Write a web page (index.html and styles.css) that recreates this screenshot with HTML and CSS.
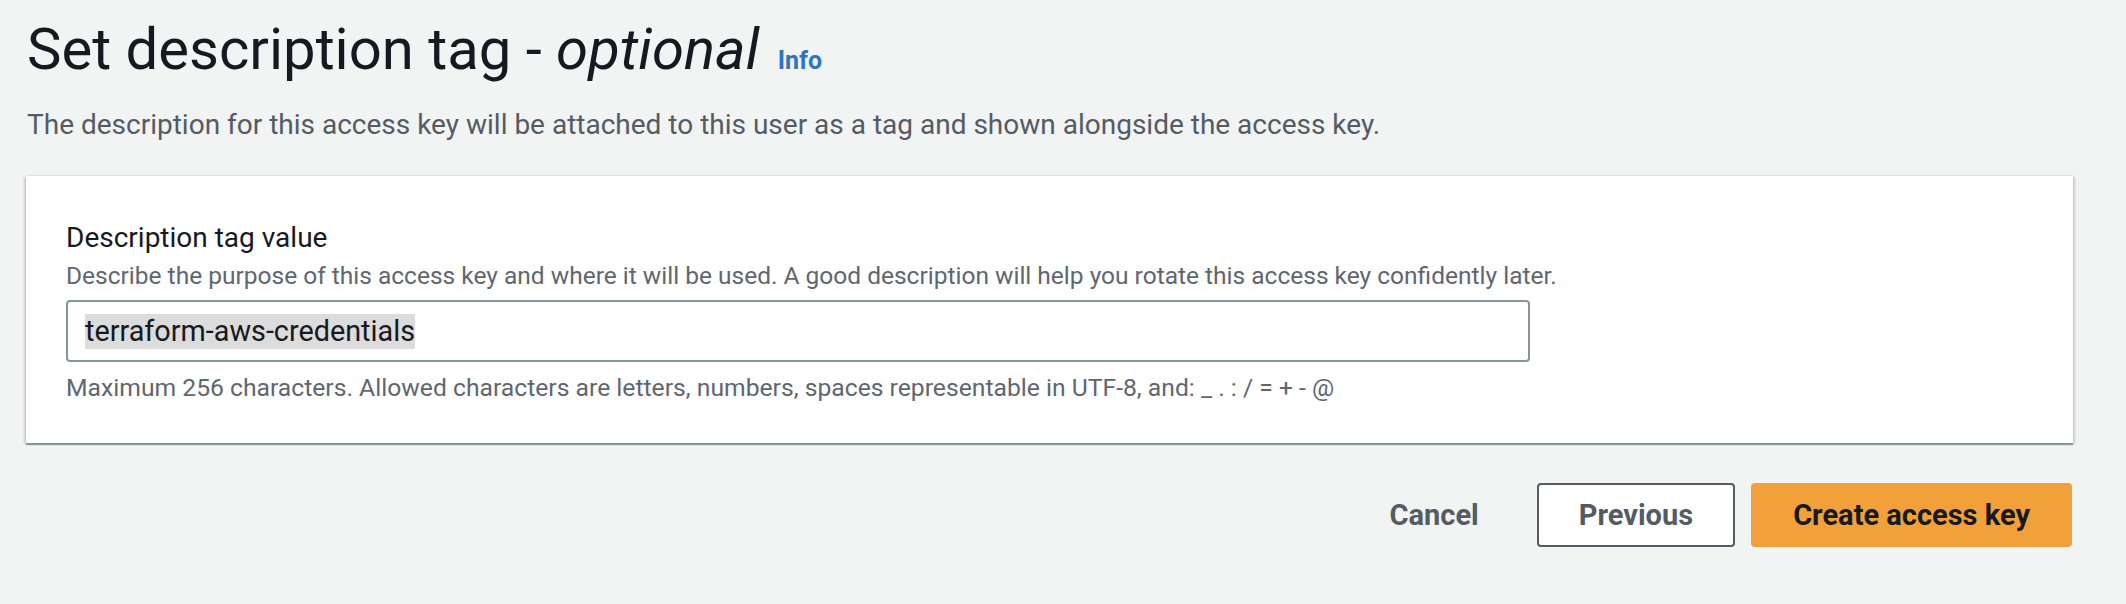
FILE: index.html
```html
<!DOCTYPE html>
<html lang="en">
<head>
<meta charset="utf-8">
<title>Set description tag</title>
<link rel="stylesheet" href="styles.css">
</head>
<body>
<main class="page">
  <header class="head">
    <h1 class="title">Set description tag - <em class="opt">optional</em> <a class="info" href="#">Info</a></h1>
    <p class="lead">The description for this access key will be attached to this user as a tag and shown alongside the access key.</p>
  </header>
  <section class="card">
    <div class="field">
      <label class="label">Description tag value</label>
      <p class="hint">Describe the purpose of this access key and where it will be used. A good description will help you rotate this access key confidently later.</p>
      <div class="input" role="textbox"><span class="sel">terraform-aws-credentials</span></div>
      <p class="constraint">Maximum 256 characters. Allowed characters are letters, numbers, spaces representable in UTF-8, and: _ . : / = + - @</p>
    </div>
  </section>
  <div class="actions">
    <button class="btn link">Cancel</button>
    <button class="btn normal">Previous</button>
    <button class="btn primary">Create access key</button>
  </div>
</main>
</body>
</html>
```
FILE: styles.css
```css
* { box-sizing: border-box; }
html, body { margin: 0; padding: 0; }
body {
  background: #f2f3f3;
  font-family: Roboto, "Open Sans", sans-serif;
  color: #16191f;
  width: 2126px;
  height: 604px;
  overflow: hidden;
}
.page {
  padding: 13px 53px 0 26px;
}
.title {
  margin: 0;
  font-size: 58px;
  line-height: 72px;
  font-weight: 400;
  color: #16191f;
  padding-left: 1px;
}
.opt { font-style: italic; }
.info {
  font-size: 25px;
  font-weight: 700;
  color: #2c75c2;
  text-decoration: none;
  margin-left: 4px;
}
.lead {
  margin: 8px 0 0 1px;
  font-size: 28px;
  line-height: 40px;
  color: #545b64;
}
.card {
  margin-top: 31px;
  background: #fff;
  padding: 40px 40px 39px 40px;
  box-shadow: 0 2px 1px 0 rgba(0, 28, 36, 0.35), 2px 1px 2px 0 rgba(0, 28, 36, 0.15), -2px 1px 2px 0 rgba(0, 28, 36, 0.15), 0 -1px 1px 0 rgba(0, 28, 36, 0.06);
}
.field { display: flex; flex-direction: column; }
.label {
  font-size: 28px;
  line-height: 44px;
  color: #16191f;
}
.hint {
  margin: 0;
  font-size: 24.5px;
  line-height: 32px;
  color: #5f6670;
}
.input {
  margin-top: 8px;
  width: 1464px;
  height: 62px;
  border: 2px solid #879596;
  border-radius: 4px;
  padding: 0 0 0 17px;
  display: flex;
  align-items: center;
  font-size: 28.8px;
  color: #16191f;
}
.sel {
  background: #dcdcdc;
  line-height: 35px;
}
.constraint {
  margin: 10px 0 0;
  font-size: 24.7px;
  line-height: 32px;
  color: #5f6670;
}
.actions {
  margin-top: 40px;
  display: flex;
  justify-content: flex-end;
  gap: 16px;
  padding-right: 1px;
}
.btn {
  font-family: inherit;
  font-size: 29px;
  font-weight: 700;
  height: 64px;
  padding: 0 40px;
  border-radius: 4px;
  border: 2px solid transparent;
  background: transparent;
  cursor: pointer;
}
.link { color: #545b64; }
.normal { background: #fff; border-color: #545b64; color: #545b64; }
.primary { background: #f1a03a; border-color: #f1a03a; color: #16191f; }
```
